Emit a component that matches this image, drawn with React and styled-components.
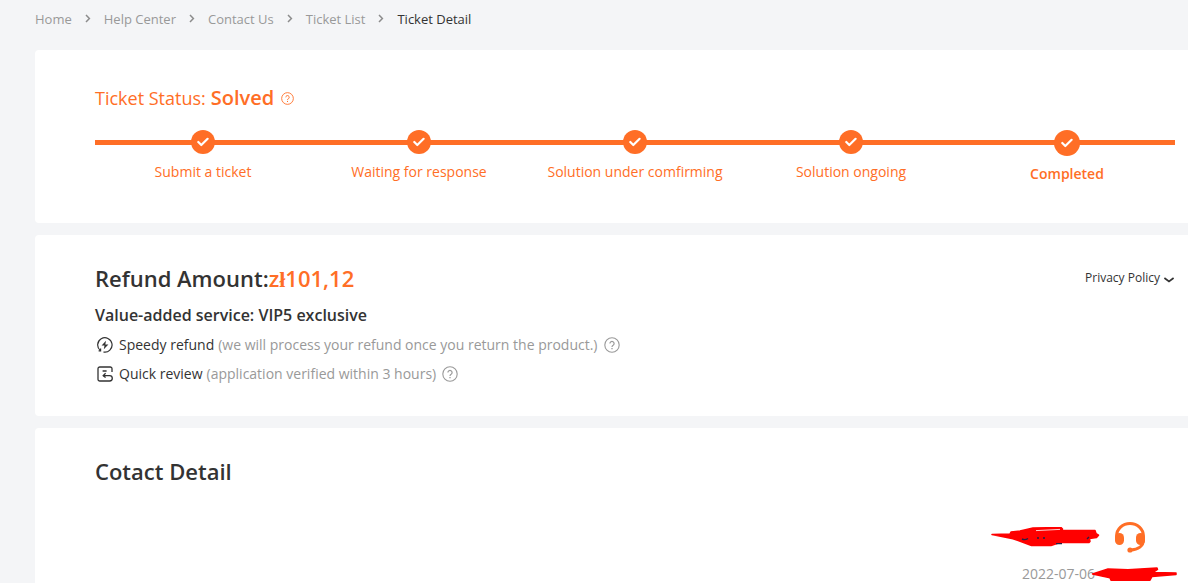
import React from 'react'
import styled, { createGlobalStyle } from 'styled-components'

const crumbs = ['Home', 'Help Center', 'Contact Us', 'Ticket List']

const steps = [
    'Submit a ticket',
    'Waiting for response',
    'Solution under comfirming',
    'Solution ongoing',
    'Completed',
]

const services = [
    {
        name: 'Speedy refund',
        note: '(we will process your refund once you return the product.)',
        Icon: SpeedyIcon,
    },
    {
        name: 'Quick review',
        note: '(application verified within 3 hours)',
        Icon: ReviewIcon,
    },
]

function CrumbArrow() {
    return (
        <svg width="6" height="10" viewBox="0 0 6 10" fill="none" aria-hidden="true">
            <path d="M1 1l3.4 3.5L1 8" stroke="#8c8c8c" strokeWidth="1.5" />
        </svg>
    )
}

function CheckIcon() {
    return (
        <svg width="12" height="10" viewBox="0 0 12 10" fill="none" aria-hidden="true">
            <path d="M1.3 5l3 3L10.6 1.8" stroke="#fff" strokeWidth="2.2" strokeLinecap="round" strokeLinejoin="round" />
        </svg>
    )
}

function QuestionIcon({ size }) {
    return (
        <svg width={size} height={size} viewBox="0 0 16 16" fill="none" stroke="currentColor" aria-hidden="true">
            <circle cx="8" cy="8" r="7.2" strokeWidth="1.1" />
            <path d="M5.9 6.5a2.1 2.1 0 1 1 3.2 1.8c-.7.4-1.1.8-1.1 1.6" strokeWidth="1.2" />
            <path d="M8 11v1.3" strokeWidth="1.3" />
        </svg>
    )
}

function SpeedyIcon() {
    return (
        <svg width="16" height="16" viewBox="0 0 16 16" fill="none" aria-hidden="true">
            <path d="M3.4 13.6A7.2 7.2 0 1 1 6.4 15M3.6 11.6v2.2H1.6" stroke="#333" strokeWidth="1.2" />
            <path d="M9 3.8L4.6 8.4h2.9l-.7 3.8L11.4 7.4H8.3z" fill="#333" />
        </svg>
    )
}

function ReviewIcon() {
    return (
        <svg width="16" height="16" viewBox="0 0 16 16" fill="none" stroke="#333" strokeWidth="1.3" aria-hidden="true">
            <path d="M15 6V2.8A1.8 1.8 0 0 0 13.2 1H2.8A1.8 1.8 0 0 0 1 2.8v10.4A1.8 1.8 0 0 0 2.8 15h9.8a2.7 2.7 0 0 0 0-5.4H6.4" />
            <path d="M8.6 7.2L6.2 9.6l2.4 2M5.6 5h4" />
        </svg>
    )
}

function HeadsetIcon() {
    return (
        <svg width="32" height="32" viewBox="0 0 32 32" fill="none" aria-hidden="true">
            <path d="M2.6 16V15a13.4 12.6 0 0 1 26.8 0v4c0 6-5 9.6-13 10" stroke="#ff6e26" strokeWidth="3" strokeLinecap="round" />
            <rect x="1" y="12" width="9" height="12" rx="4.5" fill="#ff6e26" />
            <rect x="22" y="12" width="9" height="12" rx="4.5" fill="#ff6e26" />
            <circle cx="16" cy="29" r="2.6" fill="#ff6e26" />
        </svg>
    )
}

const App = () => {
    return (
        <>
            <GlobalStyle />
            <Page>
                <Breadcrumb aria-label="Breadcrumb">
                    {crumbs.map((crumb) => (
                        <React.Fragment key={crumb}>
                            <a href="#">{crumb}</a>
                            <CrumbArrow />
                        </React.Fragment>
                    ))}
                    <span className="current">Ticket Detail</span>
                </Breadcrumb>

                <StatusCard>
                    <StatusTitle>
                        <span>Ticket Status:</span>
                        <strong>Solved</strong>
                        <HelpButton type="button" aria-label="About the ticket status" $color="#ff6e26">
                            <QuestionIcon size={13} />
                        </HelpButton>
                    </StatusTitle>
                    <Steps>
                        {steps.map((step, i) => (
                            <Step key={step} $current={i === steps.length - 1}>
                                <div className="track">
                                    <span className="dot"><CheckIcon /></span>
                                </div>
                                <span className="label">{step}</span>
                            </Step>
                        ))}
                    </Steps>
                </StatusCard>

                <RefundCard>
                    <div>
                        <Title>Refund Amount:<span>z<b>ł</b>101,12</span></Title>
                        <SubTitle>Value-added service: VIP5 exclusive</SubTitle>
                        <ServiceList>
                            {services.map(({ name, note, Icon }) => (
                                <li key={name}>
                                    <Icon />
                                    <span className="name">{name}</span>
                                    <span className="note">{note}</span>
                                    <HelpButton type="button" aria-label={`About ${name}`} $color="#999">
                                        <QuestionIcon size={16} />
                                    </HelpButton>
                                </li>
                            ))}
                        </ServiceList>
                    </div>
                    <PolicyButton type="button">
                        Privacy Policy
                        <svg width="12" height="12" viewBox="0 0 12 12" fill="none" aria-hidden="true">
                            <path d="M1.4 6L6 9.4 10.6 6" stroke="#333" strokeWidth="1.7" />
                        </svg>
                    </PolicyButton>
                </RefundCard>

                <ContactCard>
                    <Title>Cotact Detail</Title>
                    <Message>
                        <div className="sender">
                            <svg width="110" height="20" viewBox="0 0 110 20" aria-hidden="true">
                                <path d="M2 7.5L20 7l1-2 9-1 13-3 28-.5 1.5 1.5-1 1.5H105l1 3 2.5 1.7-2 2.3-7 1 .5 3-1 1H70l-9 3H41.5L23 11.7z" fill="#f00" stroke="#f00" strokeWidth="1.5" strokeLinejoin="round" />
                                <path d="M46 3.6l24-1.2" stroke="#fff" strokeWidth=".8" />
                                <path d="M32 12q3 1.5 6-.5M47 11h2M53 11h2M66 16.6h6M97 12l2-2" fill="none" stroke="#224" strokeWidth="1.4" />
                            </svg>
                            <HeadsetIcon />
                        </div>
                        <div className="time">
                            <time>2022-07-06</time>
                            <svg width="86" height="14" viewBox="0 0 86 14" aria-hidden="true">
                                <path d="M1.5 7L17 2l20 .8L66 1l.5 1.5-4.5 3 23 .5v1.5L61 9.5l-2 3.7H20l-1-2.5z" fill="#f00" stroke="#f00" strokeWidth="1.5" strokeLinejoin="round" />
                            </svg>
                        </div>
                    </Message>
                </ContactCard>
            </Page>
        </>
    )
}

export default App

const GlobalStyle = createGlobalStyle`
 * {
     box-sizing : border-box;
 }
 body {
     margin : 0;
     background-color : #f4f5f7;
     color : #333;
     font-family : 'Open Sans', 'Noto Sans', sans-serif;
     font-size : 14px;
 }
 svg {
     display : block;
     flex-shrink : 0;
 }
 button {
     padding : 0;
     border : none;
     background : none;
     font-family : inherit;
     cursor : pointer;
 }
`
const Page = styled.main`
 padding-left : 35px;
 display : flex;
 flex-direction : column;
 gap : 12px;
`
const Breadcrumb = styled.nav`
 height : 38px;
 display : flex;
 align-items : center;
 gap : 13px;
 font-size : 13px;
 line-height : 18px;
 a {
     color : #999;
     text-decoration : none;
 }
 .current {
     color : #333;
 }
`
const Card = styled.section`
 background-color : white;
 border-radius : 4px 0 0 4px;
 padding : 32px 13px 39px 60px;
`
const StatusCard = styled(Card)``

const StatusTitle = styled.h2`
 margin : 0 0 14px;
 display : flex;
 align-items : center;
 gap : 5px;
 color : #ff6e26;
 font-size : 18px;
 font-weight : 400;
 line-height : 32px;
 strong {
     font-size : 20px;
     font-weight : 600;
 }
`
const HelpButton = styled.button`
 margin-left : 2px;
 color : ${({ $color }) => $color};
`
const Steps = styled.ol`
 margin : 0;
 padding : 0;
 list-style : none;
 display : flex;
`
const Step = styled.li`
 flex : 1;
 display : flex;
 flex-direction : column;
 align-items : center;
 color : #ff6e26;
 .track {
     width : 100%;
     display : flex;
     justify-content : center;
     background : linear-gradient(#ff6e26, #ff6e26) 0 12px / 100% 5px no-repeat;
 }
 .dot {
     width : ${({ $current }) => ($current ? '26px' : '24px')};
     height : ${({ $current }) => ($current ? '26px' : '24px')};
     margin-top : 2px;
     display : flex;
     align-items : center;
     justify-content : center;
     border-radius : 50%;
     background-color : #ff6e26;
 }
 .label {
     margin-top : 8px;
     line-height : 20px;
     font-weight : ${({ $current }) => ($current ? 600 : 400)};
 }
`
const RefundCard = styled(Card)`
 padding-top : 27px;
 padding-bottom : 28px;
 display : flex;
 justify-content : space-between;
 align-items : flex-start;
`
const Title = styled.h2`
 margin : 0;
 font-size : 22px;
 font-weight : 600;
 line-height : 32px;
 span {
     color : #ff6e26;
 }
 b {
     font-family : 'Liberation Serif', serif;
     line-height : 1;
 }
`
const SubTitle = styled.h3`
 margin : 9px 0 3px;
 font-size : 16px;
 font-weight : 600;
 line-height : 24px;
`
const ServiceList = styled.ul`
 margin : 0;
 padding : 0;
 list-style : none;
 li {
     height : 29px;
     padding-left : 2px;
     display : flex;
     align-items : center;
     gap : 4px;
 }
 .name {
     padding-left : 2px;
 }
 .note {
     color : #999;
 }
`
const PolicyButton = styled.button`
 margin-top : 7px;
 display : flex;
 align-items : center;
 gap : 3px;
 color : #333;
 font-size : 12px;
 line-height : 18px;
`
const ContactCard = styled(Card)`
 border-radius : 4px 0 0 0;
 padding-top : 27px;
 padding-bottom : 0;
`
const Message = styled.div`
 margin-top : 34px;
 display : flex;
 flex-direction : column;
 align-items : flex-end;
 .sender {
     padding-right : 29px;
     display : flex;
     align-items : center;
     gap : 14px;
 }
 .time {
     position : relative;
     margin-top : 12px;
     padding-right : 80px;
     color : #999;
     line-height : 18px;
 }
 .time svg {
     position : absolute;
     top : 2px;
     right : -2px;
 }
`
